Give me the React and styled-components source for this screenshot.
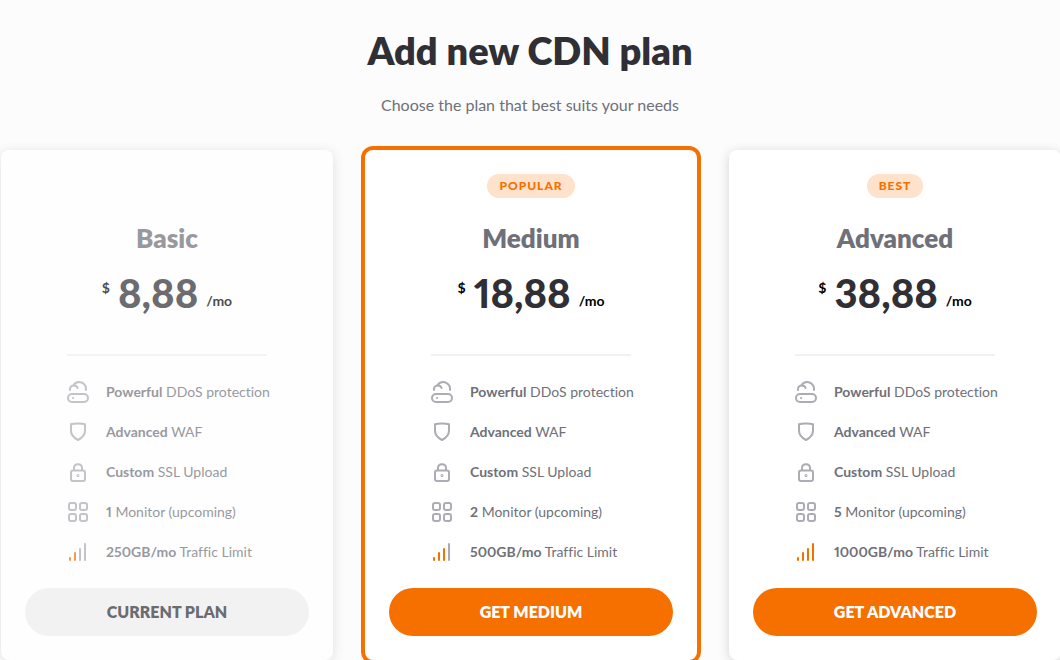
import React from 'react';
import styled, { createGlobalStyle } from 'styled-components';

const FEATURES = [
    { icon: 'ddos', text: 'DDoS protection' },
    { icon: 'waf', text: 'WAF' },
    { icon: 'ssl', text: 'SSL Upload' },
    { icon: 'monitor', text: 'Monitor (upcoming)' },
    { icon: 'traffic', text: 'Traffic Limit' },
];

const PLANS = [
    { name: 'Basic', price: '8,88', values: ['Powerful', 'Advanced', 'Custom', '1', '250GB/mo'], level: 2, button: 'Current plan', current: true },
    { name: 'Medium', price: '18,88', badge: 'Popular', values: ['Powerful', 'Advanced', 'Custom', '2', '500GB/mo'], level: 3, button: 'Get Medium', selected: true },
    { name: 'Advanced', price: '38,88', badge: 'Best', values: ['Powerful', 'Advanced', 'Custom', '5', '1000GB/mo'], level: 4, button: 'Get Advanced' },
];

const BARS = [
    { x: 4, y: 18 },
    { x: 9, y: 13 },
    { x: 14, y: 9 },
    { x: 19, y: 4 },
];

const FeatureIcon = ({ name, level }) => {
    if (name === 'ddos') {
        return (
            <Icon viewBox='0 0 24 24' aria-hidden='true'>
                <rect x='2' y='14' width='20' height='8' rx='4' />
                <path d='M4 10V9C4 7 5.6 5.4 7.7 5.4C9.8 5.4 11.2 6.5 11.6 8' />
                <path d='M7.6 5.2C8.7 3.2 10.7 2 13 2C16.8 2 20 5 20 8.5V10' />
                <path d='M7 18H7.2' />
            </Icon>
        )
    }
    if (name === 'waf') {
        return (
            <Icon viewBox='0 0 24 24' aria-hidden='true'>
                <path d='M5 4.2C8 3.3 16 3.3 19 4.2V10.5C19 14.8 16 18 12 20C8 18 5 14.8 5 10.5Z' />
            </Icon>
        )
    }
    if (name === 'ssl') {
        return (
            <Icon viewBox='0 0 24 24' aria-hidden='true'>
                <rect x='5' y='10.5' width='14' height='10.5' rx='2' />
                <path d='M8 10V8C8 5.8 9.7 4.2 12 4.2C14.3 4.2 16 5.8 16 8V10' />
                <circle cx='12' cy='15.5' r='.5' />
            </Icon>
        )
    }
    if (name === 'monitor') {
        return (
            <Icon viewBox='0 0 24 24' aria-hidden='true'>
                <rect x='3' y='3' width='7' height='7' rx='2' />
                <rect x='14' y='3' width='7' height='7' rx='2' />
                <rect x='3' y='14' width='7' height='7' rx='2' />
                <rect x='14' y='14' width='7' height='7' rx='2' />
            </Icon>
        )
    }
    return (
        <Icon viewBox='0 0 24 24' aria-hidden='true'>
            {
                BARS.map((bar, index) => {
                    return <Bar key={index} $active={index < level} d={`M${bar.x} ${bar.y}V20`} />
                })
            }
        </Icon>
    )
};

const PlanCard = ({ plan }) => {
    return (
        <Card $selected={plan.selected} $current={plan.current}>
            <BadgeLine>{plan.badge && <Badge>{plan.badge}</Badge>}</BadgeLine>
            <PlanName>{plan.name}</PlanName>
            <Price>
                <Currency>$</Currency>
                <Amount>{plan.price}</Amount>
                <Period>/mo</Period>
            </Price>
            <Features>
                {
                    FEATURES.map((item, index) => {
                        return (
                            <Feature key={item.icon}>
                                <FeatureIcon name={item.icon} level={plan.level} />
                                <span><b>{plan.values[index]}</b> {item.text}</span>
                            </Feature>
                        )
                    })
                }
            </Features>
            <PlanButton type='button' $current={plan.current}>{plan.button}</PlanButton>
        </Card>
    )
};

const App = () => {
    return (
        <Page>
            <GlobalStyle />
            <Title>Add new CDN plan</Title>
            <Subtitle>Choose the plan that best suits your needs</Subtitle>
            <Plans>
                {PLANS.map(plan => <PlanCard key={plan.name} plan={plan} />)}
            </Plans>
        </Page>
    )
};

export default App;

const GlobalStyle = createGlobalStyle`
    * {
        box-sizing: border-box;
    }
    body {
        margin: 0;
        background-color: #fcfcfc;
        font-family: Lato, 'Open Sans', sans-serif;
        font-variant-numeric: proportional-nums;
        font-variant-ligatures: none;
        color: #6f7079;
    }
`;

const Page = styled.main`
    padding-top: 26px;
    overflow-x: clip;
    text-align: center;
`;

const Title = styled.h1`
    margin: 0;
    font-size: 38px;
    line-height: 48px;
    font-weight: 800;
    color: #2f2f35;
`;

const Subtitle = styled.p`
    margin: 19px 0 33px;
    font-size: 16px;
    line-height: 24px;
`;

const Plans = styled.div`
    display: grid;
    grid-template-columns: repeat(3, 1fr);
    gap: 32px;
    margin: 0 -1px 0 1px;
`;

const Card = styled.section`
    display: flex;
    flex-direction: column;
    align-items: center;
    padding: 24px;
    border-radius: 8px;
    background-color: #fff;
    box-shadow: ${props => props.$selected ? '0 0 0 4px #f67000' : '0 2px 12px rgba(0,0,0,.16)'};
    opacity: ${props => props.$current ? .7 : 1};
`;

const BadgeLine = styled.div`
    height: 24px;
`;

const Badge = styled.span`
    display: block;
    padding: 0 12px;
    border-radius: 12px;
    background-color: #fee2cc;
    font-size: 12px;
    line-height: 24px;
    font-weight: 900;
    letter-spacing: 1px;
    text-transform: uppercase;
    color: #f67000;
`;

const PlanName = styled.h2`
    margin: 24px 0 0;
    font-size: 26px;
    line-height: 32px;
    font-weight: 800;
`;

const Price = styled.div`
    display: flex;
    gap: 8px;
    margin-top: 15px;
    height: 48px;
    line-height: 48px;
    font-weight: 700;
    color: #000;
`;

const Currency = styled.span`
    font-size: 14px;
    line-height: 38px;
`;

const Amount = styled.span`
    font-size: 40px;
    font-weight: 900;
    color: #2f2f35;
`;

const Period = styled.span`
    padding-top: 8px;
    font-size: 14px;
`;

const Features = styled.ul`
    width: 200px;
    margin: 37px 0 0;
    padding: 16px 0 0;
    border-top: 2px solid #f1f1f2;
    list-style: none;
`;

const Feature = styled.li`
    display: flex;
    align-items: center;
    gap: 16px;
    height: 40px;
    font-size: 14px;
    white-space: nowrap;
    >span{
        padding-bottom: 2px;
    }
`;

const Icon = styled.svg`
    flex: none;
    width: 24px;
    height: 24px;
    margin-left: -1px;
    fill: none;
    stroke: #acacb4;
    stroke-width: 2;
    stroke-linecap: round;
    stroke-linejoin: round;
`;

const Bar = styled.path`
    stroke: ${props => props.$active ? '#f67000' : '#acacb4'};
`;

const PlanButton = styled.button`
    width: 100%;
    height: 48px;
    margin-top: 16px;
    padding: 0 0 2px;
    border: 0;
    border-radius: 24px;
    background-color: ${props => props.$current ? '#efefef' : '#f67000'};
    font-family: inherit;
    font-size: 16px;
    font-weight: 800;
    text-transform: uppercase;
    color: ${props => props.$current ? '#2f2f35' : '#fff'};
    cursor: pointer;
`;
